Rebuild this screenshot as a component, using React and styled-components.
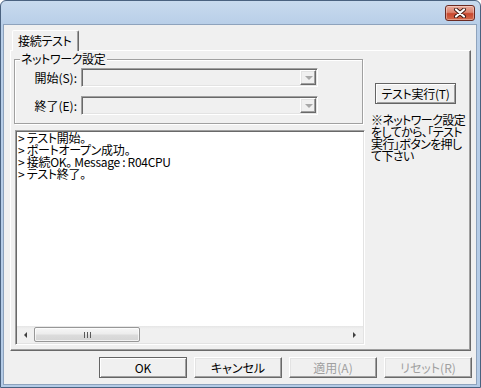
import React from "react";
import styled, { createGlobalStyle, css } from "styled-components";

const GlobalStyle = createGlobalStyle`
  html, body { margin: 0; padding: 0; background: #ffffff; }
  body {
    font-family: "Noto Sans CJK JP", "Noto Sans", sans-serif;
    font-size: 12px;
    color: #000;
  }
  * { box-sizing: border-box; }
`;

const uiFont = css`
  font-family: "Noto Sans CJK JP", "Noto Sans CJK SC", sans-serif;
  font-size: 12px;
  font-feature-settings: "palt";
`;

const raised = css`
  border: 1px solid;
  border-color: #ffffff #696969 #696969 #ffffff;
  box-shadow: inset -1px -1px 0 #a0a0a0, inset 1px 1px 0 #e3e3e3;
  background: #f0f0f0;
`;

const sunken = css`
  border: 1px solid;
  border-color: #a0a0a0 #ffffff #ffffff #a0a0a0;
  box-shadow: inset 1px 1px 0 #696969, inset -1px -1px 0 #e3e3e3;
`;

const Window = styled.div`
  width: 481px;
  height: 388px;
  border: 1px solid #4a6280;
  border-radius: 6px 6px 0 0;
  background: linear-gradient(#c8daee, #b8cee8 24px, #b4cbe6);
  padding: 0 3px 2px 2px;
  display: flex;
  flex-direction: column;
  overflow: hidden;
`;

const TitleBar = styled.div`
  height: 23px;
  flex: none;
  display: flex;
  justify-content: flex-end;
  align-items: flex-start;
  padding: 4px 2px 0 0;
`;

const CloseButton = styled.div`
  width: 30px;
  height: 16px;
  border: 1px solid #6b2a22;
  border-radius: 3px;
  background: linear-gradient(#e9a99a 0%, #dc8470 45%, #c8472e 55%, #d46b4d 100%);
  box-shadow: inset 0 0 0 1px rgba(255, 255, 255, 0.35);
  display: flex;
  align-items: center;
  justify-content: center;
`;

const Client = styled.div`
  flex: 1;
  border: 1px solid #8ea3bd;
  background: #f0f0f0;
  display: flex;
  flex-direction: column;
  padding: 5px 4px 0 6px;
  ${uiFont};
`;

const TabStrip = styled.div`
  display: flex;
  padding-left: 2px;
  height: 20px;
  position: relative;
  z-index: 1;
`;

const Tab = styled.div`
  height: 21px;
  padding: 0 7px 0 5px;
  border: 1px solid;
  border-bottom: none;
  border-color: #ffffff #696969 transparent #ffffff;
  box-shadow: inset -1px 0 0 #a0a0a0;
  border-radius: 2px 2px 0 0;
  background: #f0f0f0;
  line-height: 19px;
  white-space: nowrap;
  letter-spacing: -0.3px;
`;

const Panel = styled.div`
  width: 461px;
  height: 301px;
  border: 1px solid;
  border-color: #ffffff #696969 #696969 #ffffff;
  box-shadow: inset -1px -1px 0 #a0a0a0;
  display: flex;
  padding-left: 3px;
`;

const LeftColumn = styled.div`
  width: 351px;
  display: flex;
  flex-direction: column;
`;

const GroupBox = styled.div`
  position: relative;
  margin-top: 8px;
  width: 349px;
  height: 65px;
  border: 1px solid #a0a0a0;
  box-shadow: inset 1px 1px 0 #ffffff, 1px 1px 0 #ffffff;
  padding-top: 8px;
  display: flex;
  flex-direction: column;
  gap: 9px;
`;

const Legend = styled.span`
  position: absolute;
  top: -8px;
  left: 5px;
  padding: 0 2px 0 1px;
  background: #f0f0f0;
  line-height: 14px;
  white-space: nowrap;
  letter-spacing: -0.4px;
`;

const FieldRow = styled.div`
  display: grid;
  grid-template-columns: 62px 237px;
  column-gap: 4px;
  align-items: center;
`;

const FieldLabel = styled.span`
  text-align: right;
  line-height: 19px;
  white-space: nowrap;
`;

const Combo = styled.div`
  height: 19px;
  ${sunken};
  background: #f0f0f0;
  padding: 1px;
  display: flex;
  justify-content: flex-end;
`;

const DropButton = styled.div`
  width: 16px;
  height: 15px;
  ${raised};
  display: flex;
  align-items: center;
  justify-content: center;
`;

const DownTriangle = styled.span`
  width: 0;
  height: 0;
  border-left: 4px solid transparent;
  border-right: 4px solid transparent;
  border-top: 4px solid #a8a8a8;
  margin-left: 1px;
`;

const LogBox = styled.div`
  margin-top: 6px;
  margin-left: 1px;
  width: 350px;
  height: 215px;
  ${sunken};
  background: #ffffff;
  padding: 1px;
  display: flex;
  flex-direction: column;
`;

const LogText = styled.div`
  flex: 1;
  padding: 0 0 0 1px;
  line-height: 12px;
  white-space: pre;
  letter-spacing: -0.3px;
`;

const HScroll = styled.div`
  height: 17px;
  flex: none;
  display: flex;
  background: linear-gradient(#e6e6e6, #f0f0f0 3px, #f0f0f0);
`;

const ScrollArrow = styled.div`
  width: 17px;
  height: 17px;
  flex: none;
  display: flex;
  align-items: center;
  justify-content: center;
`;

const ArrowGlyph = styled.span`
  width: 0;
  height: 0;
  border-top: 3px solid transparent;
  border-bottom: 3px solid transparent;
  ${(p) =>
    p.$dir === "left"
      ? css`border-right: 3px solid #404040;`
      : css`border-left: 3px solid #404040;`}
`;

const Track = styled.div`
  flex: 1;
  display: flex;
  align-items: center;
`;

const Thumb = styled.div`
  width: 106px;
  height: 15px;
  border: 1px solid #979797;
  border-radius: 2px;
  background: linear-gradient(#f6f6f6 0%, #ececec 48%, #dcdcdc 52%, #d4d4d4 100%);
  box-shadow: inset 0 0 0 1px rgba(255, 255, 255, 0.7);
  display: flex;
  align-items: center;
  justify-content: center;
`;

const Grip = styled.span`
  width: 7px;
  height: 6px;
  background: repeating-linear-gradient(90deg, #5a5a5a 0 1px, transparent 1px 3px);
`;

const RightColumn = styled.div`
  width: 98px;
  margin-left: 7px;
  padding-top: 32px;
  display: flex;
  flex-direction: column;
`;

const Button = styled.button`
  ${uiFont};
  width: ${(p) => p.$width || 88}px;
  height: 21px;
  padding: 0;
  ${raised};
  color: #000;
  line-height: 17px;
  white-space: nowrap;
  ${(p) =>
    p.$default &&
    css`
      border-color: #646464;
      box-shadow: inset 1px 1px 0 #ffffff, inset -1px -1px 0 #a0a0a0;
    `}
  &:disabled {
    color: #a0a0a0;
  }
`;

const TestButton = styled(Button)`
  margin-left: 3px;
  letter-spacing: -0.3px;
`;

const Hint = styled.div`
  margin-top: 10px;
  margin-left: -1px;
  line-height: 12px;
  white-space: pre;
  letter-spacing: -0.6px;
`;

const Footer = styled.div`
  margin-top: 6px;
  display: flex;
  justify-content: flex-end;
  gap: 7px;
`;

const logLines = [
  "> テスト開始。",
  "> ポートオープン成功。",
  "> 接続OK。 Message : R04CPU",
  "> テスト終了。",
];

const hintLines = [
  "※ネットワーク設定",
  "をしてから、「テスト",
  "実行」ボタンを押し",
  "て下さい",
];

export default function App() {
  return (
    <>
      <GlobalStyle />
      <Window>
        <TitleBar>
          <CloseButton>
            <svg width="14" height="10" viewBox="0 0 14 10">
              <path d="M3 1.5 L11 8.5 M11 1.5 L3 8.5" stroke="#3b1711" strokeWidth="4" strokeLinecap="round" />
              <path d="M3 1.5 L11 8.5 M11 1.5 L3 8.5" stroke="#ffffff" strokeWidth="2.2" strokeLinecap="round" />
            </svg>
          </CloseButton>
        </TitleBar>
        <Client>
          <TabStrip>
            <Tab>接続テスト</Tab>
          </TabStrip>
          <Panel>
            <LeftColumn>
              <GroupBox>
                <Legend>ネットワーク設定</Legend>
                <FieldRow>
                  <FieldLabel>開始(S):</FieldLabel>
                  <Combo>
                    <DropButton>
                      <DownTriangle />
                    </DropButton>
                  </Combo>
                </FieldRow>
                <FieldRow>
                  <FieldLabel>終了(E):</FieldLabel>
                  <Combo>
                    <DropButton>
                      <DownTriangle />
                    </DropButton>
                  </Combo>
                </FieldRow>
              </GroupBox>
              <LogBox>
                <LogText>{logLines.join("\n")}</LogText>
                <HScroll>
                  <ScrollArrow>
                    <ArrowGlyph $dir="left" />
                  </ScrollArrow>
                  <Track>
                    <Thumb>
                      <Grip />
                    </Thumb>
                  </Track>
                  <ScrollArrow>
                    <ArrowGlyph $dir="right" />
                  </ScrollArrow>
                </HScroll>
              </LogBox>
            </LeftColumn>
            <RightColumn>
              <TestButton $width={81} $default>テスト実行(T)</TestButton>
              <Hint>{hintLines.join("\n")}</Hint>
            </RightColumn>
          </Panel>
          <Footer>
            <Button $default>OK</Button>
            <Button>キャンセル</Button>
            <Button disabled>適用(A)</Button>
            <Button disabled>リセット(R)</Button>
          </Footer>
        </Client>
      </Window>
    </>
  );
}
